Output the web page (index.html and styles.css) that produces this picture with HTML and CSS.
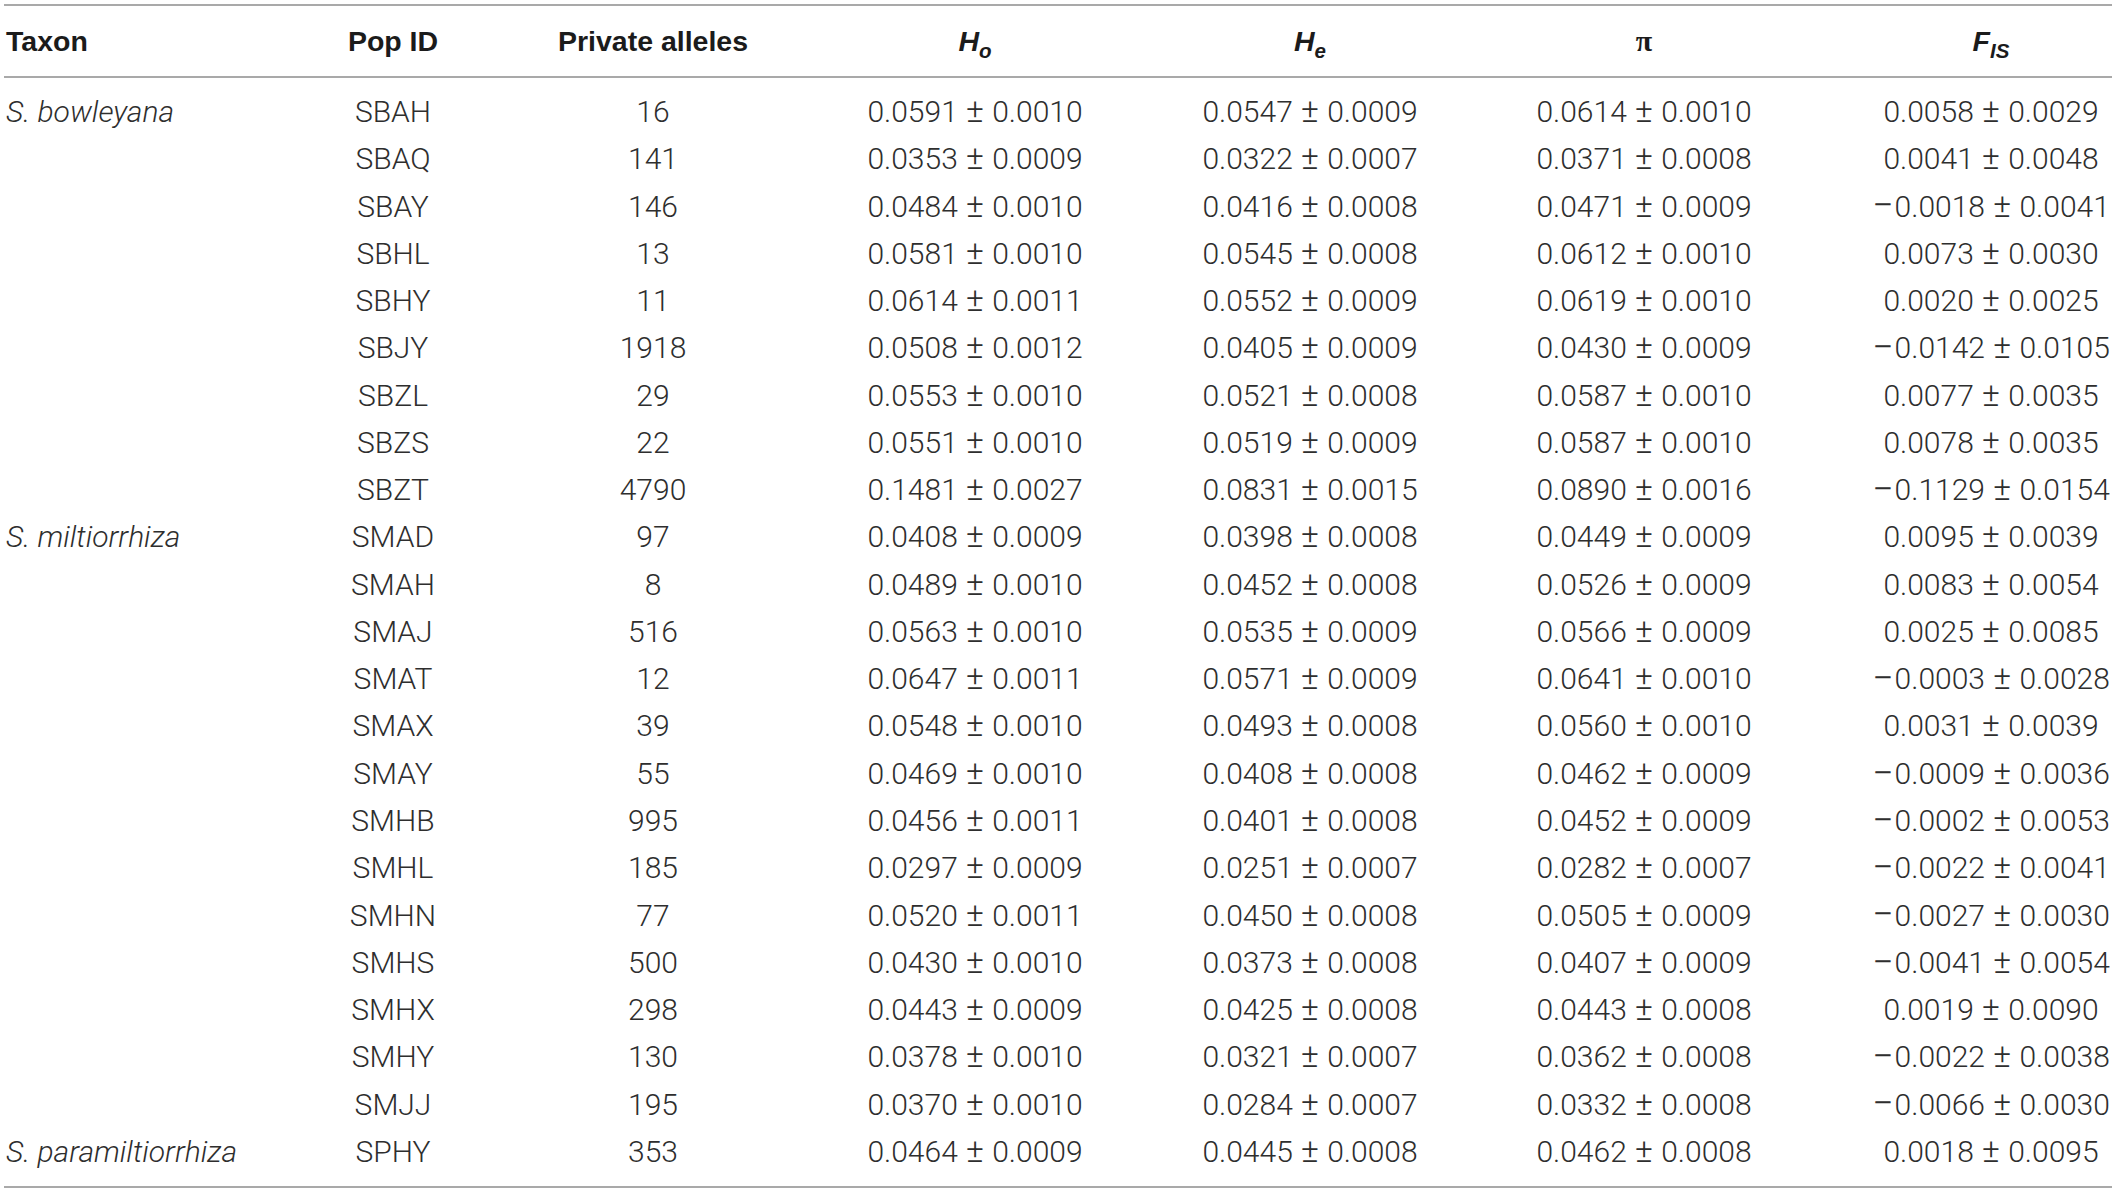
FILE: index.html
```html
<!DOCTYPE html>
<html lang="en">
<head>
<meta charset="utf-8">
<title>Genetic diversity</title>
<link rel="stylesheet" href="styles.css">
</head>
<body>
<table class="stats">
  <colgroup>
    <col class="c-taxon"><col class="c-pop"><col class="c-priv"><col class="c-ho"><col class="c-he"><col class="c-pi"><col class="c-fis">
  </colgroup>
  <thead>
    <tr>
      <th class="left">Taxon</th>
      <th>Pop ID</th>
      <th>Private alleles</th>
      <th><span class="sym">H</span><sub class="sub">o</sub></th>
      <th><span class="sym">H</span><sub class="sub">e</sub></th>
      <th><span class="pi">π</span></th>
      <th class="last"><span class="sym">F</span><sub class="sub">IS</sub></th>
    </tr>
  </thead>
  <tbody>
    <tr class="first"><td class="left taxon">S. bowleyana</td><td>SBAH</td><td>16</td><td>0.0591 <span class="pm">±</span> 0.0010</td><td>0.0547 <span class="pm">±</span> 0.0009</td><td>0.0614 <span class="pm">±</span> 0.0010</td><td class="last">0.0058 <span class="pm">±</span> 0.0029</td></tr>
    <tr><td class="left taxon"></td><td>SBAQ</td><td>141</td><td>0.0353 <span class="pm">±</span> 0.0009</td><td>0.0322 <span class="pm">±</span> 0.0007</td><td>0.0371 <span class="pm">±</span> 0.0008</td><td class="last">0.0041 <span class="pm">±</span> 0.0048</td></tr>
    <tr><td class="left taxon"></td><td>SBAY</td><td>146</td><td>0.0484 <span class="pm">±</span> 0.0010</td><td>0.0416 <span class="pm">±</span> 0.0008</td><td>0.0471 <span class="pm">±</span> 0.0009</td><td class="last"><span class="neg">−</span>0.0018 <span class="pm">±</span> 0.0041</td></tr>
    <tr><td class="left taxon"></td><td>SBHL</td><td>13</td><td>0.0581 <span class="pm">±</span> 0.0010</td><td>0.0545 <span class="pm">±</span> 0.0008</td><td>0.0612 <span class="pm">±</span> 0.0010</td><td class="last">0.0073 <span class="pm">±</span> 0.0030</td></tr>
    <tr><td class="left taxon"></td><td>SBHY</td><td>11</td><td>0.0614 <span class="pm">±</span> 0.0011</td><td>0.0552 <span class="pm">±</span> 0.0009</td><td>0.0619 <span class="pm">±</span> 0.0010</td><td class="last">0.0020 <span class="pm">±</span> 0.0025</td></tr>
    <tr><td class="left taxon"></td><td>SBJY</td><td>1918</td><td>0.0508 <span class="pm">±</span> 0.0012</td><td>0.0405 <span class="pm">±</span> 0.0009</td><td>0.0430 <span class="pm">±</span> 0.0009</td><td class="last"><span class="neg">−</span>0.0142 <span class="pm">±</span> 0.0105</td></tr>
    <tr><td class="left taxon"></td><td>SBZL</td><td>29</td><td>0.0553 <span class="pm">±</span> 0.0010</td><td>0.0521 <span class="pm">±</span> 0.0008</td><td>0.0587 <span class="pm">±</span> 0.0010</td><td class="last">0.0077 <span class="pm">±</span> 0.0035</td></tr>
    <tr><td class="left taxon"></td><td>SBZS</td><td>22</td><td>0.0551 <span class="pm">±</span> 0.0010</td><td>0.0519 <span class="pm">±</span> 0.0009</td><td>0.0587 <span class="pm">±</span> 0.0010</td><td class="last">0.0078 <span class="pm">±</span> 0.0035</td></tr>
    <tr><td class="left taxon"></td><td>SBZT</td><td>4790</td><td>0.1481 <span class="pm">±</span> 0.0027</td><td>0.0831 <span class="pm">±</span> 0.0015</td><td>0.0890 <span class="pm">±</span> 0.0016</td><td class="last"><span class="neg">−</span>0.1129 <span class="pm">±</span> 0.0154</td></tr>
    <tr><td class="left taxon">S. miltiorrhiza</td><td>SMAD</td><td>97</td><td>0.0408 <span class="pm">±</span> 0.0009</td><td>0.0398 <span class="pm">±</span> 0.0008</td><td>0.0449 <span class="pm">±</span> 0.0009</td><td class="last">0.0095 <span class="pm">±</span> 0.0039</td></tr>
    <tr><td class="left taxon"></td><td>SMAH</td><td>8</td><td>0.0489 <span class="pm">±</span> 0.0010</td><td>0.0452 <span class="pm">±</span> 0.0008</td><td>0.0526 <span class="pm">±</span> 0.0009</td><td class="last">0.0083 <span class="pm">±</span> 0.0054</td></tr>
    <tr><td class="left taxon"></td><td>SMAJ</td><td>516</td><td>0.0563 <span class="pm">±</span> 0.0010</td><td>0.0535 <span class="pm">±</span> 0.0009</td><td>0.0566 <span class="pm">±</span> 0.0009</td><td class="last">0.0025 <span class="pm">±</span> 0.0085</td></tr>
    <tr><td class="left taxon"></td><td>SMAT</td><td>12</td><td>0.0647 <span class="pm">±</span> 0.0011</td><td>0.0571 <span class="pm">±</span> 0.0009</td><td>0.0641 <span class="pm">±</span> 0.0010</td><td class="last"><span class="neg">−</span>0.0003 <span class="pm">±</span> 0.0028</td></tr>
    <tr><td class="left taxon"></td><td>SMAX</td><td>39</td><td>0.0548 <span class="pm">±</span> 0.0010</td><td>0.0493 <span class="pm">±</span> 0.0008</td><td>0.0560 <span class="pm">±</span> 0.0010</td><td class="last">0.0031 <span class="pm">±</span> 0.0039</td></tr>
    <tr><td class="left taxon"></td><td>SMAY</td><td>55</td><td>0.0469 <span class="pm">±</span> 0.0010</td><td>0.0408 <span class="pm">±</span> 0.0008</td><td>0.0462 <span class="pm">±</span> 0.0009</td><td class="last"><span class="neg">−</span>0.0009 <span class="pm">±</span> 0.0036</td></tr>
    <tr><td class="left taxon"></td><td>SMHB</td><td>995</td><td>0.0456 <span class="pm">±</span> 0.0011</td><td>0.0401 <span class="pm">±</span> 0.0008</td><td>0.0452 <span class="pm">±</span> 0.0009</td><td class="last"><span class="neg">−</span>0.0002 <span class="pm">±</span> 0.0053</td></tr>
    <tr><td class="left taxon"></td><td>SMHL</td><td>185</td><td>0.0297 <span class="pm">±</span> 0.0009</td><td>0.0251 <span class="pm">±</span> 0.0007</td><td>0.0282 <span class="pm">±</span> 0.0007</td><td class="last"><span class="neg">−</span>0.0022 <span class="pm">±</span> 0.0041</td></tr>
    <tr><td class="left taxon"></td><td>SMHN</td><td>77</td><td>0.0520 <span class="pm">±</span> 0.0011</td><td>0.0450 <span class="pm">±</span> 0.0008</td><td>0.0505 <span class="pm">±</span> 0.0009</td><td class="last"><span class="neg">−</span>0.0027 <span class="pm">±</span> 0.0030</td></tr>
    <tr><td class="left taxon"></td><td>SMHS</td><td>500</td><td>0.0430 <span class="pm">±</span> 0.0010</td><td>0.0373 <span class="pm">±</span> 0.0008</td><td>0.0407 <span class="pm">±</span> 0.0009</td><td class="last"><span class="neg">−</span>0.0041 <span class="pm">±</span> 0.0054</td></tr>
    <tr><td class="left taxon"></td><td>SMHX</td><td>298</td><td>0.0443 <span class="pm">±</span> 0.0009</td><td>0.0425 <span class="pm">±</span> 0.0008</td><td>0.0443 <span class="pm">±</span> 0.0008</td><td class="last">0.0019 <span class="pm">±</span> 0.0090</td></tr>
    <tr><td class="left taxon"></td><td>SMHY</td><td>130</td><td>0.0378 <span class="pm">±</span> 0.0010</td><td>0.0321 <span class="pm">±</span> 0.0007</td><td>0.0362 <span class="pm">±</span> 0.0008</td><td class="last"><span class="neg">−</span>0.0022 <span class="pm">±</span> 0.0038</td></tr>
    <tr><td class="left taxon"></td><td>SMJJ</td><td>195</td><td>0.0370 <span class="pm">±</span> 0.0010</td><td>0.0284 <span class="pm">±</span> 0.0007</td><td>0.0332 <span class="pm">±</span> 0.0008</td><td class="last"><span class="neg">−</span>0.0066 <span class="pm">±</span> 0.0030</td></tr>
    <tr class="final"><td class="left taxon">S. paramiltiorrhiza</td><td>SPHY</td><td>353</td><td>0.0464 <span class="pm">±</span> 0.0009</td><td>0.0445 <span class="pm">±</span> 0.0008</td><td>0.0462 <span class="pm">±</span> 0.0008</td><td class="last">0.0018 <span class="pm">±</span> 0.0095</td></tr>
  </tbody>
</table>
</body>
</html>
```

FILE: styles.css
```css
html, body {
  margin: 0;
  padding: 0;
  background: #ffffff;
}

body {
  padding: 4px 0 0 4px;
}

.stats {
  width: 2108px;
  table-layout: fixed;
  border-collapse: separate;
  border-spacing: 0;
  border-top: 2px solid #a9a9a9;
  border-bottom: 2px solid #a9a9a9;
  color: #2e2e2e;
}

.c-taxon { width: 246px; }
.c-pop { width: 286px; }
.c-priv { width: 234px; }
.c-ho { width: 410px; }
.c-he { width: 260px; }
.c-pi { width: 408px; }
.c-fis { width: 264px; }

.stats th {
  height: 70px;
  padding: 0;
  border-bottom: 2px solid #a9a9a9;
  font-family: "Liberation Sans", Arial, sans-serif;
  font-weight: bold;
  font-size: 28.5px;
  color: #1b1b1b;
  text-align: center;
  vertical-align: middle;
  white-space: nowrap;
}

.stats td {
  height: 47.27px;
  padding: 0;
  font-family: Roboto, "Liberation Sans", sans-serif;
  font-weight: 300;
  font-size: 30px;
  color: #2e2e2e;
  text-align: center;
  vertical-align: middle;
  white-space: nowrap;
  line-height: 1;
}

.stats .left {
  text-align: left;
  padding-left: 2px;
}

.stats .last {
  padding-left: 22px;
}

.stats .taxon {
  font-style: italic;
}

.stats tr.first td {
  padding-top: 10.4px;
}

.stats tr.final td {
  padding-bottom: 10.4px;
}

.pm {
  font-size: 1.12em;
  line-height: 0;
  margin: 0 1px;
}

.neg {
  font-size: 1.25em;
  line-height: 0;
  vertical-align: -0.05em;
  margin-right: 1px;
}

.sym {
  font-style: italic;
  font-weight: bold;
}

.sub {
  font-style: italic;
  font-weight: bold;
  font-size: 0.72em;
  vertical-align: -0.32em;
  line-height: 0;
}

.pi {
  font-family: "Liberation Serif", "Times New Roman", serif;
  font-weight: bold;
  font-size: 30px;
}
```
